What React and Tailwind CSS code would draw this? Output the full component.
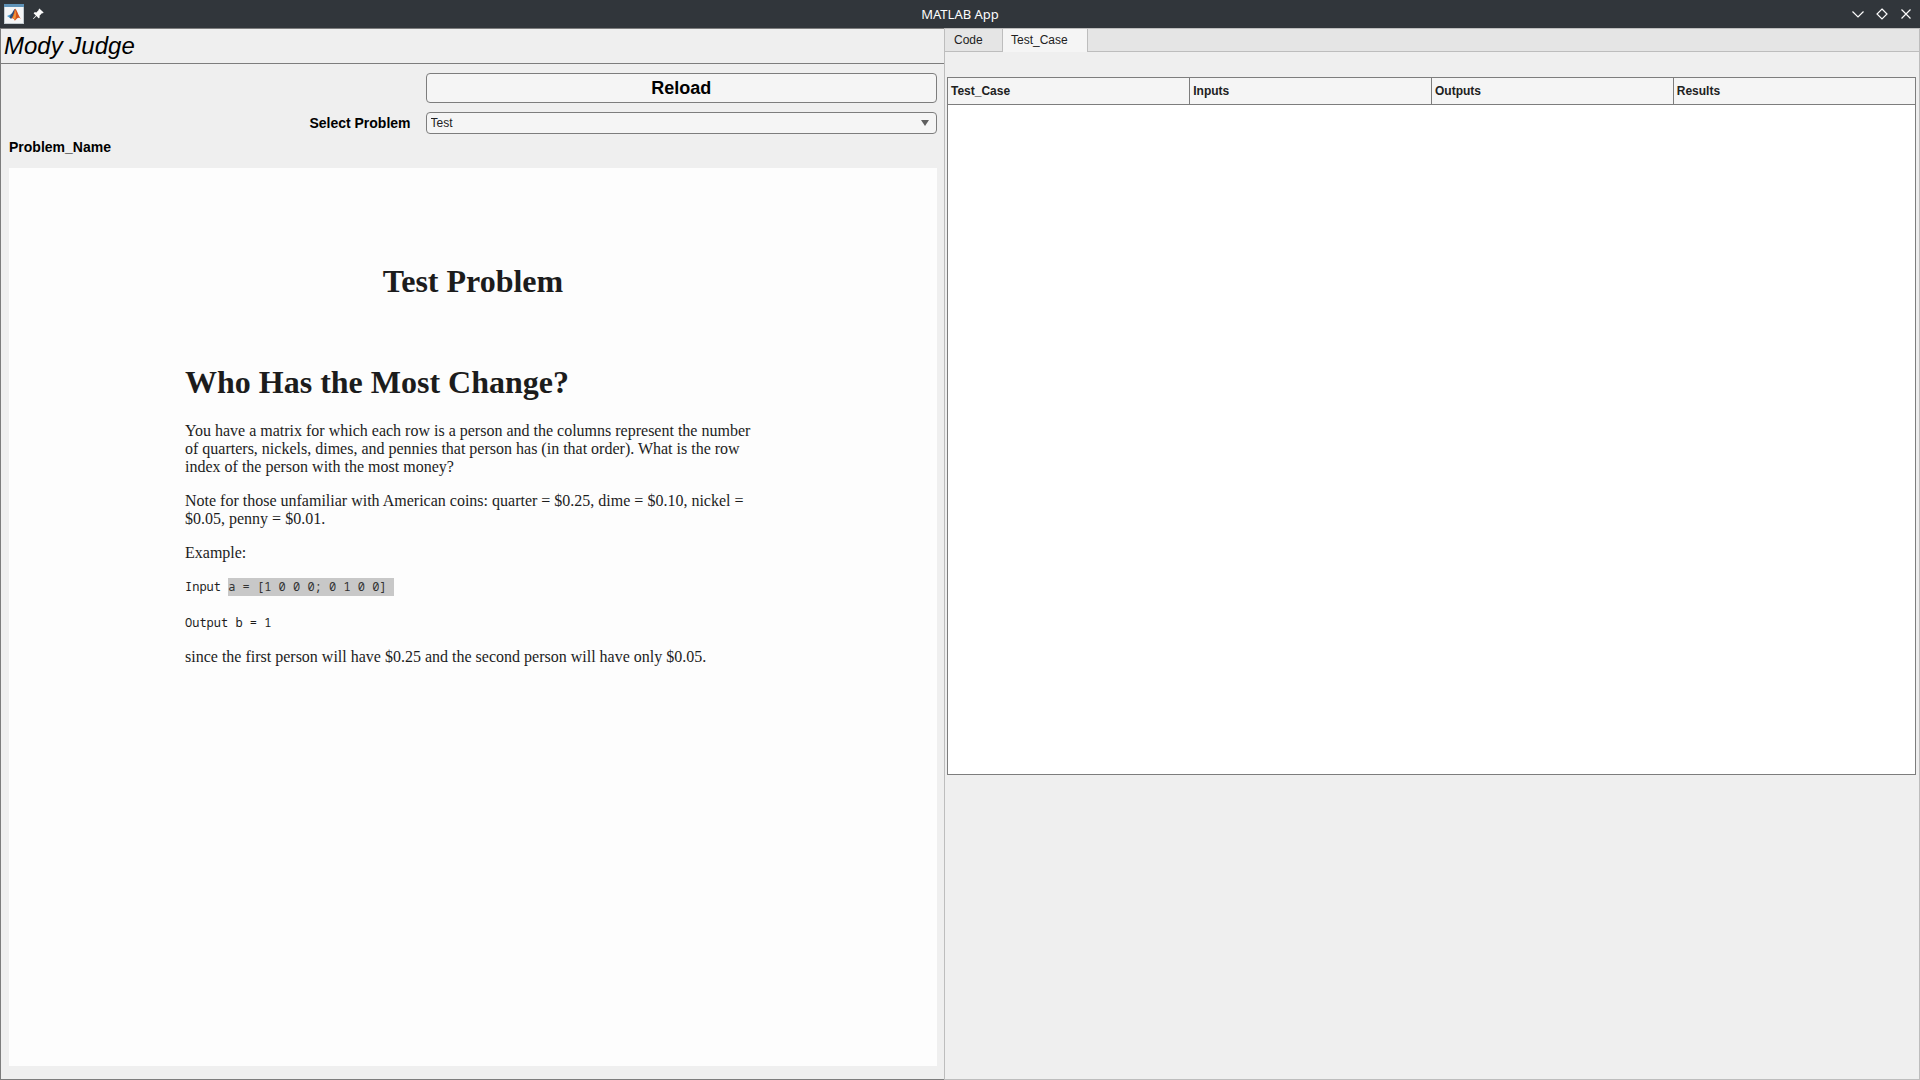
import { BsFillPinAngleFill } from 'react-icons/bs';

const columns = ['Test_Case', 'Inputs', 'Outputs', 'Results'];

function MatlabLogo() {
  return (
    <svg width="20" height="20" viewBox="0 0 20 20" aria-hidden="true">
      <rect x="0.5" y="0.5" width="19" height="19" fill="#f4f5f6" stroke="#c3cbd0" />
      <rect x="0" y="0" width="20" height="3" fill="#5f93b8" />
      <path d="M3 12 L7 10.2 L9 12.5 L6.5 14.2 Z" fill="#4a9cd0" />
      <path d="M7 10.2 C9 9 9.3 5.5 11.2 4.8 L9.5 12 L7 15 L5.5 13.3Z" fill="#2b4f7c" />
      <path d="M11.2 4.8 C12.8 5.5 14 11 17 15 C15.2 13.4 14 13.6 13 14.6 L10.8 16.8 C10.2 15 9.3 13.6 7.4 14.4 C9.8 12 10 7 11.2 4.8Z" fill="#d4501c" />
      <path d="M11.3 6 C12.2 9 12.2 12.5 11 16 C10.2 14.5 9.6 13.6 8.6 13.6 C10.2 11.5 10.6 8.5 11.3 6Z" fill="#f0983a" />
    </svg>
  );
}

function TitleBar() {
  return (
    <header className="grid h-7 shrink-0 grid-cols-[1fr_auto_1fr] items-center bg-[#31363b] text-[#fcfcfc]">
      <div className="flex items-center gap-1.5 pl-1">
        <MatlabLogo />
        <button type="button" aria-label="Pin window" className="flex size-4 items-center justify-center">
          <BsFillPinAngleFill size={12} />
        </button>
      </div>
      <h1 className="font-['Noto_Sans',sans-serif] text-[13px] leading-5">MATLAB App</h1>
      <div className="flex justify-end gap-2 pr-1.5">
        <button type="button" aria-label="Minimize" className="size-4">
          <svg viewBox="0 0 16 16" fill="none" stroke="currentColor" strokeWidth="1.2"><path d="M2.5 5.5 L8 11 L13.5 5.5" /></svg>
        </button>
        <button type="button" aria-label="Maximize" className="size-4">
          <svg viewBox="0 0 16 16" fill="none" stroke="currentColor" strokeWidth="1.2"><path d="M8 3 L13 8 L8 13 L3 8 Z" /></svg>
        </button>
        <button type="button" aria-label="Close" className="size-4">
          <svg viewBox="0 0 16 16" fill="none" stroke="currentColor" strokeWidth="1.2"><path d="M3.5 3.5 L12.5 12.5 M12.5 3.5 L3.5 12.5" /></svg>
        </button>
      </div>
    </header>
  );
}

function ProblemText() {
  return (
    <article className="min-h-0 flex-1 bg-[#fdfdfd] font-['Liberation_Serif',serif] text-base leading-[18px] text-[#1c1c1c]">
      <div className="mx-auto max-w-[576px] pt-[95px]">
        <h2 className="text-center text-[32px] leading-9 font-bold">Test Problem</h2>
        <h2 className="mt-[65px] text-[32px] leading-9 font-bold">Who Has the Most Change?</h2>
        <p className="mt-[22px]">
          You have a matrix for which each row is a person and the columns represent the number of quarters, nickels,
          dimes, and pennies that person has (in that order). What is the row index of the person with the most money?
        </p>
        <p className="mt-4">
          Note for those unfamiliar with American coins: quarter = $0.25, dime = $0.10, nickel = $0.05, penny = $0.01.
        </p>
        <p className="mt-4">Example:</p>
        <pre className="mt-4 font-['Noto_Sans_Mono','DejaVu_Sans_Mono',monospace] text-xs leading-[18px]">
          Input <mark className="inline-block bg-[#c8c8c8] text-[#333333]">{'a = [1 0 0 0; 0 1 0 0] '}</mark>
          {'\n\nOutput b = 1'}
        </pre>
        <p className="mt-4">since the first person will have $0.25 and the second person will have only $0.05.</p>
      </div>
    </article>
  );
}

function ProblemPanel() {
  return (
    <section className="flex min-h-0 flex-col border-t border-b border-l border-[#7d7d7d]">
      <h2 className="border-b border-[#7d7d7d] px-[3px] text-2xl leading-[34px] text-black italic">Mody Judge</h2>
      <div className="flex min-h-0 flex-1 flex-col pt-[9px] pr-[7px] pb-[13px] pl-2">
        <div className="grid grid-cols-[402fr_512fr] gap-x-[15px] gap-y-[9px]">
          <button
            type="button"
            className="col-start-2 h-[30px] rounded-[4px] border border-[#7d7d7d] bg-[#f5f5f5] text-lg leading-6 font-bold text-black"
          >
            Reload
          </button>
          <label htmlFor="problem" className="text-right text-sm leading-[22px] font-bold text-black">
            Select Problem
          </label>
          <div className="relative">
            <select
              id="problem"
              className="block h-[22px] w-full appearance-none rounded-[4px] border border-[#7d7d7d] bg-[#f5f5f5] px-1 text-xs text-[#212121]"
            >
              <option>Test</option>
            </select>
            <svg width="8" height="6" viewBox="0 0 8 6" className="pointer-events-none absolute top-2 right-2" aria-hidden="true">
              <path d="M0 0 H8 L4 6 Z" fill="#5f5f5f" />
            </svg>
          </div>
        </div>
        <h3 className="py-[3px] text-sm leading-5 font-bold text-black">Problem_Name</h3>
        <div className="h-2 shrink-0" />
        <ProblemText />
      </div>
    </section>
  );
}

function TestPanel() {
  return (
    <section className="flex min-h-0 flex-col border border-[#bdbdbd]">
      <div role="tablist" className="flex h-[23px] shrink-0 border-b border-[#bdbdbd] bg-[#e5e5e5] text-xs text-[#212121]">
        <button type="button" role="tab" aria-selected="false" className="w-[58px] border-r border-[#bdbdbd] pl-[9px] text-left">
          Code
        </button>
        <button type="button" role="tab" aria-selected="true" className="-mb-px w-[85px] border-r border-[#bdbdbd] bg-[#f5f5f5] pb-px pl-2 text-left">
          Test_Case
        </button>
      </div>
      <div role="tabpanel" className="flex min-h-0 flex-1 flex-col pt-[25px] pr-[3px] pl-[2px]">
        <div className="flex-[697_1_0%] border border-[#7d7d7d] bg-white">
          <table className="w-full table-fixed border-collapse">
            <thead>
              <tr className="h-[26px] border-b border-[#7d7d7d] bg-[#f5f5f5]">
                {columns.map((name) => (
                  <th key={name} scope="col" className="border-r border-[#7d7d7d] px-[3px] text-left text-xs font-bold text-[#212121] last:border-r-0">
                    {name}
                  </th>
                ))}
              </tr>
            </thead>
          </table>
        </div>
        <div className="flex-[304_1_0%]" />
      </div>
    </section>
  );
}

export default function App() {
  return (
    <div className="flex h-screen flex-col bg-[#efefef] font-['Liberation_Sans',Arial,sans-serif]">
      <TitleBar />
      <main className="grid min-h-0 flex-1 grid-cols-[944fr_976fr] grid-rows-1">
        <ProblemPanel />
        <TestPanel />
      </main>
    </div>
  );
}
